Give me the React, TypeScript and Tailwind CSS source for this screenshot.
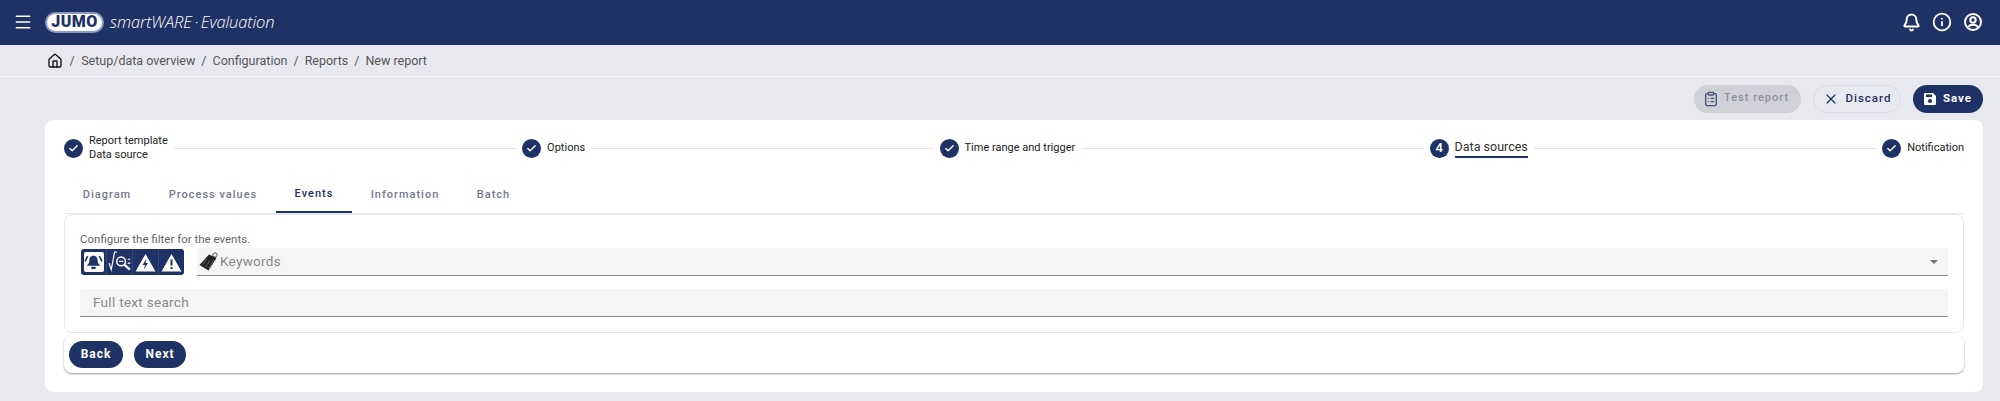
import { Bell, Check, ClipboardList, House, Info, Menu, X } from "lucide-react";

const font = { fontFamily: "Roboto, sans-serif" };

function Logo() {
  return (
    <span className="flex h-[21px] w-[59px] items-center justify-center rounded-full border-2 border-[#8f9ac4] bg-white">
      <span className="text-[16px] leading-none font-black tracking-[0.5px] text-[#1f3265]">JUMO</span>
    </span>
  );
}

function Step({ done, number, active, children }: { done?: boolean; number?: number; active?: boolean; children: React.ReactNode }) {
  return (
    <div className="flex items-center gap-[6px]">
      <span className="flex h-[19px] w-[19px] shrink-0 items-center justify-center rounded-full bg-[#1f3265] text-[13px] font-medium text-white">
        {done ? <Check size={11} strokeWidth={3} /> : number}
      </span>
      <div className={active ? "border-b-2 border-[#1f3265] pb-[1px] text-[12.500px] leading-[17px] text-[#333]" : "text-[11px] leading-[14px] text-[#222]"}>
        {children}
      </div>
    </div>
  );
}

function StepLine() {
  return <div className="mx-[6px] h-[1px] flex-1 bg-[#e4e4e4]" />;
}

function Tab({ active, children, className }: { active?: boolean; children: React.ReactNode; className: string }) {
  return (
    <div
      className={`flex h-[38px] items-center justify-center pt-[2px] text-[11px] font-medium tracking-[1px] ${className} ${
        active ? "border-b-2 border-[#1f3265] text-[#1f3265]" : "text-[#75798a]"
      }`}
    >
      {children}
    </div>
  );
}

function AlarmIcon() {
  return (
    <span className="flex h-[20px] w-[20px] items-center justify-center rounded-[2px] bg-white">
      <svg width="19" height="17" viewBox="0 0 18 16" fill="none">
        <path d="M9 1.500c2.800 0 4 2.200 4 5 0 2 1 3 2.500 4.500h-13C4 9.500 5 8.500 5 6.500c0-2.800 1.200-5 4-5z" fill="#1f3265" />
        <rect x="7" y="12" width="4" height="2.200" fill="#1f3265" />
        <path d="M3.500 2 1 7M14.500 2 17 7" stroke="#1f3265" strokeWidth="1.500" />
      </svg>
    </span>
  );
}

function AnalysisIcon() {
  return (
    <svg width="24" height="24" viewBox="0 0 22 22" fill="none" stroke="white">
      <path d="M1 12l2 6L6 2h2" strokeWidth="1.100" />
      <circle cx="12" cy="10.500" r="4" strokeWidth="1.400" />
      <path d="M15 13.500l5 4.500" strokeWidth="2.200" />
      <path d="M10 10.500h4M18 8.500h2.500M18 12h2.500" strokeWidth="1.100" />
    </svg>
  );
}

function WarningIcon({ bolt }: { bolt?: boolean }) {
  return (
    <svg width="21" height="19" viewBox="0 0 21 19">
      <path d="M10.500 1 20.500 18.500H.5z" fill="white" />
      {bolt ? (
        <path d="M11.500 5.500 7.500 12h2.500l-1 4.500 4-6.500h-2.500z" fill="#1f3265" />
      ) : (
        <path d="M9.500 6.500h2v6h-2zM9.500 14h2v2h-2z" fill="#1f3265" />
      )}
    </svg>
  );
}

function ToggleCell({ children, last }: { children: React.ReactNode; last?: boolean }) {
  return (
    <span className={`flex h-full flex-1 items-center justify-center ${last ? "" : "border-r border-[#33457a]"}`}>
      {children}
    </span>
  );
}

function TagIcon() {
  return (
    <svg width="20" height="21" viewBox="0 0 20 20">
      <circle cx="16" cy="3.500" r="2.200" fill="none" stroke="#555" strokeWidth="1" />
      <path d="M10 3 17.500 6.500 9.500 19 .5 13.500z" fill="#222" />
      <path d="M4 13l4-6M7 15l4-6.500M10 16.500l4.500-8" stroke="#aaa" strokeWidth="0.800" strokeDasharray="1.500 1" />
    </svg>
  );
}

function SaveIcon() {
  return (
    <svg width="12" height="12" viewBox="0 0 12 12">
      <path d="M1 0h8l3 3v8a1 1 0 0 1-1 1H1a1 1 0 0 1-1-1V1a1 1 0 0 1 1-1z" fill="white" />
      <rect x="2" y="1.500" width="6" height="2.500" fill="#1f3265" />
      <circle cx="6" cy="8" r="2" fill="#1f3265" />
    </svg>
  );
}

function AccountIcon() {
  return (
    <svg width="20" height="20" viewBox="0 0 20 20" fill="none" stroke="white" strokeWidth="2">
      <circle cx="10" cy="10" r="8" />
      <circle cx="10" cy="8" r="2.700" />
      <path d="M4.800 15.500c1-2 3-2.800 5.200-2.800s4.200.8 5.200 2.800" />
    </svg>
  );
}

export default function App() {
  return (
    <div style={font} className="h-[401px] w-[2000px] overflow-hidden bg-[#e8e9ee]">
      <header className="flex h-[46px] items-center justify-between border-b border-[#dfe3ee] bg-[#1f3265] pr-[17px] pl-[13px] pb-[1px]">
        <div className="flex items-center">
          <Menu size={20} color="white" strokeWidth={1.800} />
          <span className="ml-[12px]">
            <Logo />
          </span>
          <span
            style={{ fontFamily: "'Open Sans', sans-serif" }}
            className="ml-[6px] text-[16.500px] font-light tracking-[-0.1px] text-white italic"
          >
            smartWARE&#8201;·&#8201;Evaluation
          </span>
        </div>
        <div className="flex items-center gap-[11px] text-white">
          <Bell size={19} strokeWidth={2.500} />
          <Info size={20} strokeWidth={2.200} />
          <AccountIcon />
        </div>
      </header>

      <nav className="flex h-[31px] items-center border-b border-[#f6f6f8] pl-[47px] text-[12.500px] text-[#555]">
        <House size={16} color="#111" strokeWidth={2} />
        <span className="mx-[6.500px]">/</span>
        <span>Setup/data overview</span>
        <span className="mx-[6px]">/</span>
        <span>Configuration</span>
        <span className="mx-[6px]">/</span>
        <span>Reports</span>
        <span className="mx-[6px]">/</span>
        <span>New report</span>
      </nav>

      <div className="flex h-[43px] items-center justify-end gap-[12px] pr-[17px] text-[11.500px] font-medium tracking-[1px]">
        <button className="flex h-[28px] w-[107px] items-center gap-[5px] rounded-full bg-[#d0d1d6] pl-[9px] text-[11px] text-[#8e9097]">
          <ClipboardList size={16} color="#45527e" strokeWidth={2} />
          Test report
        </button>
        <button className="flex h-[28px] w-[88px] items-center justify-center gap-[7px] rounded-full border border-[#d8dae2] text-[#1f3265]">
          <X size={16} strokeWidth={1.800} />
          Discard
        </button>
        <button className="flex h-[28px] w-[70px] items-center justify-center gap-[7px] rounded-full bg-[#1f3265] font-bold text-white">
          <SaveIcon />
          Save
        </button>
      </div>

      <main className="mr-[17px] ml-[45px] h-[272px] rounded-[8px] bg-white px-[19px] pt-[7px]">
        <div className="flex h-[42px] items-center">
          <Step done>
            Report template
            <br />
            Data source
          </Step>
          <StepLine />
          <Step done>Options</Step>
          <StepLine />
          <Step done>Time range and trigger</Step>
          <StepLine />
          <Step number={4} active>
            Data sources
          </Step>
          <StepLine />
          <Step done>Notification</Step>
        </div>

        <div className="flex h-[45px] items-end border-b border-[#e8e8e8]">
          <Tab className="w-[86px]">Diagram</Tab>
          <Tab className="w-[126px]">Process values</Tab>
          <Tab active className="w-[76px]">
            Events
          </Tab>
          <Tab className="w-[106px]">Information</Tab>
          <Tab className="w-[71px]">Batch</Tab>
        </div>

        <section className="h-[119px] rounded-[8px] border border-[#e8e8e8] pt-[16px] pr-[15px] pl-[15px]">
          <p className="text-[11.500px] leading-[17px] text-[#666]">Configure the filter for the events.</p>
          <div className="flex items-center gap-[13px]">
            <div className="ml-[1px] flex h-[26px] w-[103px] items-center rounded-[3px] bg-[#1f3265]">
              <ToggleCell>
                <AlarmIcon />
              </ToggleCell>
              <ToggleCell>
                <AnalysisIcon />
              </ToggleCell>
              <ToggleCell>
                <WarningIcon bolt />
              </ToggleCell>
              <ToggleCell last>
                <WarningIcon />
              </ToggleCell>
            </div>
            <div className="flex h-[28px] flex-1 items-center rounded-t-[3px] border-b border-[#8a8a8a] bg-[#f5f5f5] pr-[10px] pl-[2px]">
              <TagIcon />
              <span className="ml-[1px] flex-1 text-[13.500px] tracking-[0.3px] text-[#888]">Keywords</span>
              <span className="h-0 w-0 border-x-[4px] border-t-[4px] border-x-transparent border-t-[#757575]" />
            </div>
          </div>
          <div className="mt-[13px] flex h-[28px] items-center rounded-t-[3px] border-b border-[#8a8a8a] bg-[#f5f5f5] pl-[13px] text-[13.500px] tracking-[0.3px] text-[#888]">
            Full text search
          </div>
        </section>

        <div className="mt-[2px] flex h-[38px] items-center gap-[11px] rounded-[8px] bg-white pl-[5px] text-[12px] font-bold tracking-[1px] text-white shadow-[0_1px_2px_rgba(0,0,0,0.4)]">
          <button className="h-[27px] w-[54px] rounded-full bg-[#1f3265]">Back</button>
          <button className="h-[27px] w-[52px] rounded-full bg-[#1f3265]">Next</button>
        </div>
      </main>
    </div>
  );
}
